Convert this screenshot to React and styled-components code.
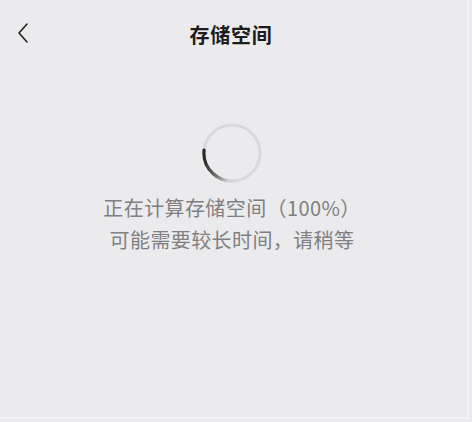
import React from 'react';
import styled, { createGlobalStyle } from 'styled-components';

const GlobalStyle = createGlobalStyle`
  html, body {
    margin: 0;
    padding: 0;
    background: #ebebed;
  }
`;

const Screen = styled.div`
  box-sizing: border-box;
  width: 469px;
  height: 419px;
  background: #ebebed;
  border-right: 2px solid #f4f4f6;
  border-bottom: 2px solid #f4f4f6;
  font-family: "Noto Sans CJK SC", "Noto Sans", sans-serif;
  display: flex;
  flex-direction: column;
`;

const Header = styled.header`
  position: relative;
  height: 68px;
  display: flex;
  align-items: center;
  justify-content: center;
`;

const BackButton = styled.button`
  position: absolute;
  left: 12px;
  top: 21px;
  width: 22px;
  height: 24px;
  padding: 0;
  border: 0;
  background: none;
  display: flex;
  align-items: center;
  justify-content: center;
`;

const Title = styled.h1`
  margin: 0 0 0 -5px;
  font-size: 20px;
  font-weight: 700;
  color: #1c1c1c;
  letter-spacing: 0.8px;
`;

const Body = styled.main`
  display: flex;
  flex-direction: column;
  align-items: center;
  padding-top: 54px;
  margin-left: -3px;
`;

const Spinner = styled.svg`
  width: 62px;
  height: 62px;
  display: block;
`;

const Status = styled.p`
  margin: 8px 0 0;
  font-size: 20px;
  line-height: 32px;
  letter-spacing: 0.4px;
  color: #808082;
  text-align: center;
`;

const Chevron = () => (
  <svg width="14" height="22" viewBox="0 0 14 22" fill="none">
    <path d="M11 2 L3 11 L11 20" stroke="#222" strokeWidth="1.6" strokeLinecap="round" strokeLinejoin="round" />
  </svg>
);

// ring with a dark arc on the lower-left quarter, fading toward the bottom
const LoadingRing = () => (
  <Spinner viewBox="0 0 62 62">
    <defs>
      <linearGradient id="arcFade" x1="0" y1="0.4" x2="0.75" y2="1">
        <stop offset="0" stopColor="#2a2a2a" />
        <stop offset="0.55" stopColor="#6a6a6a" />
        <stop offset="1" stopColor="#d6d6d8" />
      </linearGradient>
    </defs>
    <circle cx="31" cy="31" r="28" stroke="#d9d9db" strokeWidth="3" fill="none" />
    <path
      d="M3.1 28 A28 28 0 0 0 36 58.5"
      stroke="url(#arcFade)"
      strokeWidth="3.2"
      strokeLinecap="round"
      fill="none"
    />
  </Spinner>
);

export default function App() {
  return (
    <>
      <GlobalStyle />
      <Screen>
        <Header>
          <BackButton aria-label="返回">
            <Chevron />
          </BackButton>
          <Title>存储空间</Title>
        </Header>
        <Body>
          <LoadingRing />
          <Status>
            正在计算存储空间（100%）
            <br />
            可能需要较长时间，请稍等
          </Status>
        </Body>
      </Screen>
    </>
  );
}
